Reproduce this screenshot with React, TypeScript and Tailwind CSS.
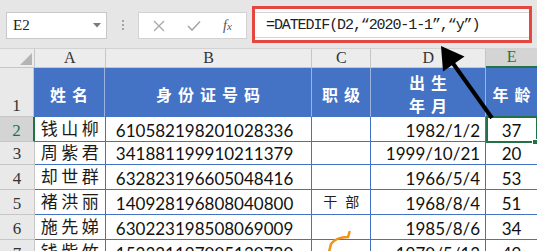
import React from "react";

const CJK = { fontFamily: '"Noto Sans CJK SC", sans-serif' };
const LATO = { fontFamily: 'Lato, "Noto Sans CJK SC", sans-serif' };
const SERIF = { fontFamily: '"Liberation Serif", serif' };
const MONO = { fontFamily: '"Liberation Mono", "Noto Sans CJK SC", monospace' };

type Row = { n: string; name: string; id: string; job: string; date: string; age: string; h: string };

const rows: Row[] = [
  { n: "2", name: "钱山柳", id: "610582198201028336", job: "", date: "1982/1/2", age: "37", h: "h-[25px]" },
  { n: "3", name: "周紫君", id: "341881199910211379", job: "", date: "1999/10/21", age: "20", h: "h-[23px]" },
  { n: "4", name: "却世群", id: "632823196605048416", job: "", date: "1966/5/4", age: "53", h: "h-[25px]" },
  { n: "5", name: "褚洪丽", id: "140928196808040800", job: "干部", date: "1968/8/4", age: "51", h: "h-[25px]" },
  { n: "6", name: "施先娣", id: "630223198508069009", job: "", date: "1985/8/6", age: "34", h: "h-[25px]" },
  { n: "7", name: "钱紫竹", id: "152321197005130720", job: "", date: "1970/5/13", age: "49", h: "h-[25px]" },
];

function Hdr({ t }: { t: string }) {
  return <span className="tracking-[6px] mr-[-6px]">{t}</span>;
}

export default function App() {
  return (
    <div className="relative w-[537px] h-[251px] overflow-hidden bg-white">
      {/* toolbar */}
      <div className="h-[49px] bg-[#e6e6e6] border-b border-[#d2d2d2] flex items-start">
        <div className="ml-[6px] mt-[12px] w-[101px] h-[27px] bg-white border border-[#c8c8c8] flex items-center justify-between pl-[6px] pr-[5px]">
          <span className="text-[15px] text-[#222] leading-none" style={SERIF}>E2</span>
          <svg width="8" height="5" viewBox="0 0 8 5"><path d="M0 0 L8 0 L4 4.5 Z" fill="#7a7a7a" /></svg>
        </div>
        <div className="ml-[15px] mt-[20px] flex flex-col gap-[2px]">
          <div className="w-[2px] h-[2px] bg-[#a4a4a4]" />
          <div className="w-[2px] h-[2px] bg-[#a4a4a4]" />
          <div className="w-[2px] h-[2px] bg-[#a4a4a4]" />
        </div>
        <div className="ml-[14px] mt-[12px] w-[109px] h-[27px] bg-white border border-[#d2d2d2] flex items-center">
          <svg className="ml-[14px]" width="12" height="12" viewBox="0 0 12 12"><path d="M1 1 L11 11 M11 1 L1 11" stroke="#a8a8a8" strokeWidth="1.3" /></svg>
          <svg className="ml-[22px]" width="14" height="12" viewBox="0 0 14 12"><path d="M1 6 L5 10 L13 1.5" stroke="#a8a8a8" strokeWidth="1.6" fill="none" /></svg>
          <span className="ml-[22px] text-[14px] italic text-[#555] leading-none" style={SERIF}>f<span className="text-[11px]">x</span></span>
        </div>
        <div className="ml-[5px] mt-[6px] w-[280px] h-[37px] border-[3px] border-[#e5463d] bg-white pt-[3px]">
          <div className="h-[26px] border-y border-[#d4d4d4] bg-white flex items-center pl-[11px]">
            <span className="text-[15px] tracking-[-1.1px] text-[#222] leading-none" style={MONO}>
              =DATEDIF(D2,“2020-1-1”,“y”)
            </span>
          </div>
        </div>
      </div>

      {/* column headers */}
      <div className="flex h-[19px] bg-[#ececec] text-[16px] text-[#333] leading-[18px]" style={SERIF}>
        <div className="relative w-[35px] border-r border-b border-[#c6c6c6]">
          <svg className="absolute left-[20px] top-[4px]" width="12" height="12" viewBox="0 0 12 12"><path d="M12 0 L12 12 L0 12 Z" fill="#b4b4b4" /></svg>
        </div>
        <div className="w-[71px] border-r border-b border-[#c6c6c6] flex justify-center items-end">A</div>
        <div className="w-[207px] border-r border-b border-[#c6c6c6] flex justify-center items-end">B</div>
        <div className="w-[59px] border-r border-b border-[#c6c6c6] flex justify-center items-end">C</div>
        <div className="w-[115px] border-r border-b border-[#c6c6c6] flex justify-center items-end">D</div>
        <div className="w-[51px] bg-[#d4d4d4] border-b-2 border-[#217346] text-[#217346] flex justify-center items-end">E</div>
      </div>

      {/* header row 1 */}
      <div className="flex h-[49px]">
        <div className="w-[35px] bg-[#e9e9e9] border-r border-b border-[#c6c6c6] flex justify-center items-end text-[17px] text-[#333] leading-[20px]" style={SERIF}>1</div>
        <div className="flex flex-1 bg-[#4472c4] text-white font-bold text-[16px]" style={CJK}>
          <div className="w-[71px] border-r border-b border-r-[#9db3df] border-b-[#4472c4] flex justify-center items-center pt-[3px]"><Hdr t="姓名" /></div>
          <div className="w-[207px] border-r border-b border-r-[#9db3df] border-b-[#4472c4] flex justify-center items-center pt-[3px]"><Hdr t="身份证号码" /></div>
          <div className="w-[59px] border-r border-b border-r-[#9db3df] border-b-[#4472c4] flex justify-center items-center pt-[3px]"><Hdr t="职级" /></div>
          <div className="w-[115px] border-r border-b border-r-[#9db3df] border-b-[#4472c4] flex flex-col justify-center items-center pt-[3px] leading-[23px]"><Hdr t="出生" /><Hdr t="年月" /></div>
          <div className="w-[51px] border-b border-b-[#4472c4] flex justify-center items-center pt-[3px]"><Hdr t="年龄" /></div>
        </div>
      </div>

      {/* data rows */}
      {rows.map((r) => {
        const sel = r.n === "2";
        return (
          <div key={r.n} className={`flex ${r.h}`}>
            <div
              className={
                sel
                  ? "w-[35px] bg-[#d4d4d4] border-b border-b-[#c6c6c6] border-r-2 border-r-[#217346] text-[#217346] flex justify-center items-end text-[17px] leading-[20px]"
                  : "w-[35px] bg-[#e9e9e9] border-r border-b border-[#c6c6c6] text-[#333] flex justify-center items-end text-[17px] leading-[20px]"
              }
              style={SERIF}
            >
              {r.n}
            </div>
            <div className="w-[71px] border-r border-b border-[#4472c4] flex justify-center items-center pb-[3px] text-[17px] text-[#1a1a1a]" style={CJK}>
              <span className="tracking-[3.5px] mr-[-3.5px]">{r.name}</span>
            </div>
            <div className="w-[207px] border-r border-b border-[#4472c4] flex items-end pl-[10px] text-[17px] leading-[20px] text-[#111]" style={LATO}>
              {r.id}
            </div>
            <div className="w-[59px] border-r border-b border-[#4472c4] flex justify-center items-center pb-[2px] text-[14px] text-[#222]" style={CJK}>
              <span className="tracking-[8px] mr-[-8px]">{r.job}</span>
            </div>
            <div className="w-[115px] border-r border-b border-[#4472c4] flex justify-end items-end pr-[5px] text-[17px] leading-[20px] text-[#111]" style={LATO}>
              {r.date}
            </div>
            <div className="w-[51px] border-b border-[#4472c4] flex justify-center items-end text-[17px] leading-[20px] text-[#111]" style={LATO}>
              {r.age}
            </div>
          </div>
        );
      })}

      {/* selection E2 */}
      <div className="absolute left-[486px] top-[116px] w-[52px] h-[27px] border-2 border-[#217346] pointer-events-none" />
      <div className="absolute left-[532px] top-[139px] w-[6px] h-[6px] bg-[#217346] border border-white pointer-events-none" />

      {/* annotations */}
      <svg className="absolute left-0 top-0 pointer-events-none" width="537" height="251" viewBox="0 0 537 251">
        <line x1="492" y1="118" x2="452" y2="62" stroke="#000" strokeWidth="4" />
        <polygon points="441,46 464.5,56.5 443,71.5" fill="#000" />
        <path d="M349.5 232 L348 237 Q336 237 331 244 L329 252" stroke="#f0921c" strokeWidth="2.5" fill="none" strokeLinecap="round" />
      </svg>
    </div>
  );
}
